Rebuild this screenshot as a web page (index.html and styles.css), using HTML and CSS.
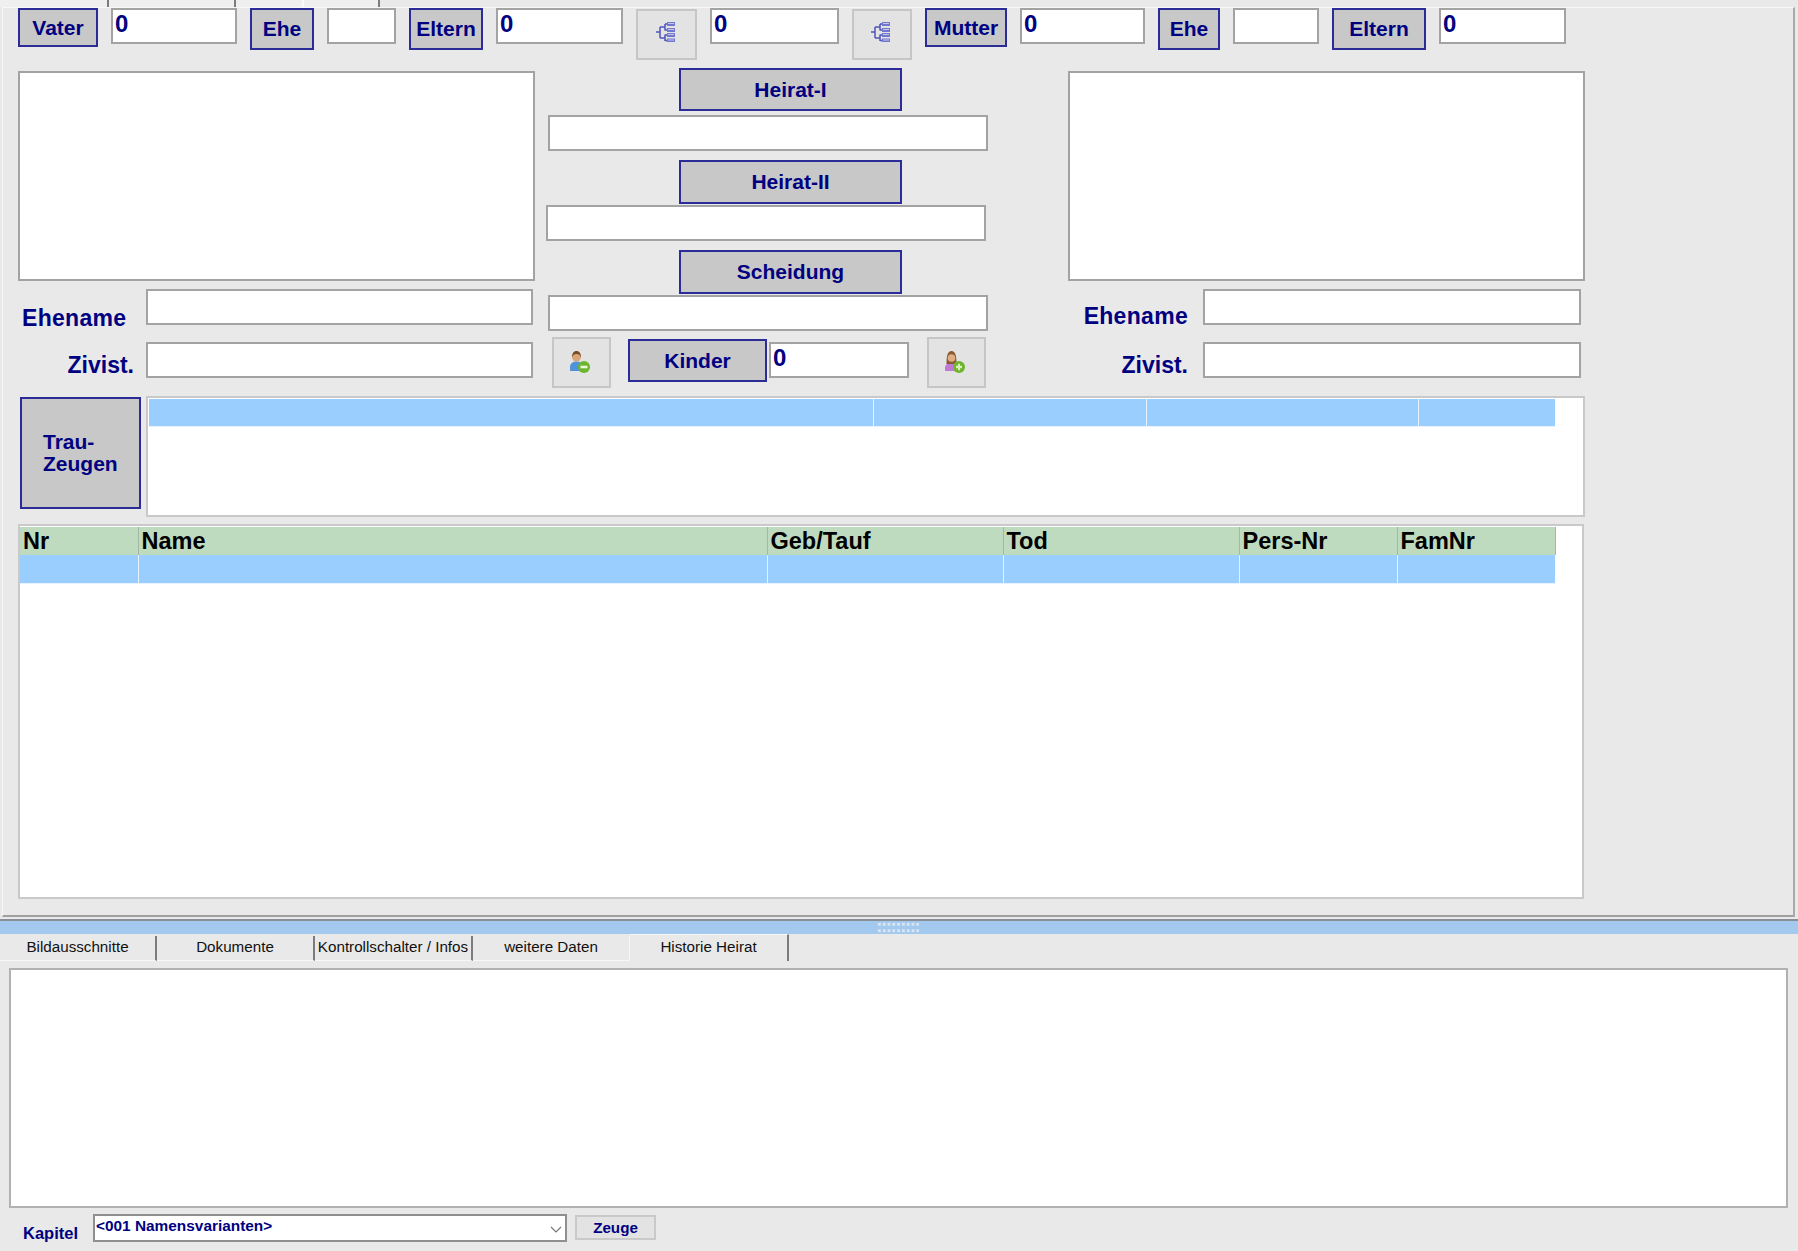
FILE: index.html
```html
<!DOCTYPE html>
<html lang="de">
<head>
  <meta charset="UTF-8">
  <title>Familie</title>
  <link rel="stylesheet" href="styles.css">
</head>
<body>
  <div class="tab-stubs">
    <div class="stub"></div>
    <div class="stub"></div>
    <div class="stub stub-light"></div>
    <div class="stub"></div>
  </div>

  <div class="upper">
    <div class="parents">
      <div class="btn btn-low">Vater</div>
      <div class="field field-num">0</div>
      <div class="btn btn-mid">Ehe</div>
      <div class="field"></div>
      <div class="btn btn-mid">Eltern</div>
      <div class="field field-num">0</div>
      <div class="icon-btn">
        <svg class="tree-icon" viewBox="0 0 20 20"><path d="M0 10h4M4 5v11M4 5h5M4 16h5M9 2v6.500M9 12.500V19M9 2h2M9 8h2M9 13h2M9 18.500h2" fill="none" stroke="#4f55bd" stroke-width="1.500"/><path d="M11 0h8v4h-8zM11 6h8v4h-8zM11 11h8v4h-8zM11 16.500h8v3.500h-8z" fill="#7277cf"/><path d="M12 1.500h6M12 7.500h6M12 12.500h6M12 18h6" stroke="#c3c6ea"/></svg>
      </div>
      <div class="field field-num">0</div>
      <div class="icon-btn">
        <svg class="tree-icon" viewBox="0 0 20 20"><path d="M0 10h4M4 5v11M4 5h5M4 16h5M9 2v6.500M9 12.500V19M9 2h2M9 8h2M9 13h2M9 18.500h2" fill="none" stroke="#4f55bd" stroke-width="1.500"/><path d="M11 0h8v4h-8zM11 6h8v4h-8zM11 11h8v4h-8zM11 16.500h8v3.500h-8z" fill="#7277cf"/><path d="M12 1.500h6M12 7.500h6M12 12.500h6M12 18h6" stroke="#c3c6ea"/></svg>
      </div>
      <div class="btn btn-low">Mutter</div>
      <div class="field field-num">0</div>
      <div class="btn btn-mid">Ehe</div>
      <div class="field"></div>
      <div class="btn btn-mid">Eltern</div>
      <div class="field field-num">0</div>
    </div>

    <div class="marriage">
      <div class="spouse">
        <div class="field spouse-box"></div>
        <div class="form-row row-name">
          <div class="label label-name">Ehename</div>
          <div class="field form-field"></div>
        </div>
        <div class="form-row row-civil">
          <div class="label label-civil">Zivist.</div>
          <div class="field form-field"></div>
        </div>
      </div>

      <div class="events">
        <div class="btn event-btn event-first">Heirat-I</div>
        <div class="field event-field event-field-in"></div>
        <div class="btn event-btn">Heirat-II</div>
        <div class="field event-field"></div>
        <div class="btn event-btn">Scheidung</div>
        <div class="field event-field event-field-in"></div>
        <div class="children">
          <div class="icon-btn">
            <svg class="person-icon" viewBox="0 0 20 22">
              <path d="M0 20v-4c0-3.500 3-5.500 6.500-5.500s6.500 2 6.500 5.500v4z" fill="#4f93d8"/>
              <circle cx="6.500" cy="6" r="4.500" fill="#d9a679"/>
              <path d="M2 6.500C2 2 4 0 6.500 0S11 2 11 6.500C10 4 9 3 6.500 3S3 4 2 6.500z" fill="#7a4a24"/>
              <circle cx="14" cy="16" r="6" fill="#6cb52c"/>
              <rect x="10.500" y="14.700" width="7" height="2.600" fill="#eaf7d8"/>
            </svg>
          </div>
          <div class="btn kinder-btn">Kinder</div>
          <div class="field field-num kinder-field">0</div>
          <div class="icon-btn">
            <svg class="person-icon" viewBox="0 0 20 22">
              <path d="M0 20v-3c0-3.500 3-5.500 6.500-5.500S13 13.500 13 17v3z" fill="#c07ad4"/>
              <path d="M1.500 13c0-8 1-13 5-13s5 5 5 13z" fill="#8a5a30"/>
              <circle cx="6.500" cy="7" r="3.800" fill="#dfae84"/>
              <circle cx="14" cy="16" r="6" fill="#6cb52c"/>
              <path d="M11 14.800h2v-2h2v2h2v2.400h-2v2h-2v-2h-2z" fill="#d9efb8"/>
            </svg>
          </div>
        </div>
      </div>

      <div class="spouse">
        <div class="field spouse-box"></div>
        <div class="form-row row-name">
          <div class="label label-name-r">Ehename</div>
          <div class="field form-field-r"></div>
        </div>
        <div class="form-row row-civil">
          <div class="label label-civil-r">Zivist.</div>
          <div class="field form-field-r"></div>
        </div>
      </div>
    </div>

    <div class="witnesses">
      <div class="btn witness-btn">Trau-<br>Zeugen</div>
      <div class="grid-box witness-box">
        <table class="witness-table">
          <tr class="row-selected">
            <td class="wc-1"></td>
            <td class="wc-2"></td>
            <td class="wc-3"></td>
            <td class="wc-4"></td>
          </tr>
        </table>
      </div>
    </div>

    <div class="grid-box kids-box">
      <table class="kids-table">
        <tr class="row-head">
          <th class="kc-1">Nr</th>
          <th class="kc-2">Name</th>
          <th class="kc-3">Geb/Tauf</th>
          <th class="kc-4">Tod</th>
          <th class="kc-5">Pers-Nr</th>
          <th class="kc-6">FamNr</th>
        </tr>
        <tr class="row-selected">
          <td></td><td></td><td></td><td></td><td></td><td></td>
        </tr>
      </table>
    </div>
  </div>

  <div class="splitter"><div class="grip"></div></div>

  <div class="lower-tabs">
    <div class="tab">Bildausschnitte</div>
    <div class="tab">Dokumente</div>
    <div class="tab">Kontrollschalter / Infos</div>
    <div class="tab tab-plain">weitere Daten</div>
    <div class="tab tab-active">Historie Heirat</div>
  </div>

  <div class="history-box"></div>

  <div class="chapter-row">
    <div class="chapter-label">Kapitel</div>
    <div class="chapter-select">
      <span>&lt;001 Namensvarianten&gt;</span>
      <svg class="chevron" viewBox="0 0 12 8"><path d="M1 1l5 5 5-5" fill="none" stroke="#777" stroke-width="1.200"/></svg>
    </div>
    <div class="zeuge-btn">Zeuge</div>
  </div>
</body>
</html>
```

FILE: styles.css
```css
* {
  box-sizing: border-box;
}

body {
  margin: 0;
  height: 1251px;
  overflow: hidden;
  background: #e9e9e9;
  font-family: "Liberation Sans", Arial, sans-serif;
  color: #000080;
}

/* remains of the upper tab bar */
.tab-stubs {
  display: grid;
  grid-template-columns: 109px 127px 68px 76px;
  height: 7px;
}

.stub {
  background: #efefef;
  border-right: 2px solid #7c7c7c;
}

.stub-light {
  border-right-color: #fafafa;
}

.upper {
  height: 910px;
  margin: 0 3px 0 2px;
  border-top: 1px solid #f8f8f8;
  border-left: 1px solid #f6f6f6;
  border-right: 2px solid #a9a9a9;
  border-bottom: 2px solid #a0a0a0;
}

.parents {
  display: grid;
  grid-template-columns: 80px 126px 64px 69px 74px 127px 61px 129px 60px 82px 125px 62px 86px 94px 127px;
  column-gap: 13px;
  align-items: start;
  height: 52px;
  margin-left: 15px;
}

.btn {
  display: flex;
  justify-content: center;
  align-items: center;
  background: #c8c8c8;
  border: 2px solid #2c2c98;
  font-size: 21px;
  font-weight: bold;
}

.btn-low {
  height: 39px;
}

.btn-mid {
  height: 42px;
}

.field {
  height: 36px;
  background: #fff;
  border: 2px solid #a3a3a3;
}

.field-num {
  padding-left: 2px;
  font-size: 24px;
  font-weight: bold;
  line-height: 27px;
}

.icon-btn {
  display: flex;
  justify-content: center;
  align-items: center;
  width: 59px;
  height: 51px;
  margin-top: 1px;
  background: #e3e3e3;
  border: 2px solid #c6c6c6;
}

.parents .icon-btn {
  width: 100%;
}

.tree-icon {
  width: 20px;
  height: 20px;
  margin: 0 0 5px -2px;
}

.person-icon {
  width: 20px;
  height: 22px;
  margin: 0 0 2px -3px;
}

.marriage {
  display: grid;
  grid-template-columns: 517px 533px 517px;
  height: 319px;
  margin: 8px 0 0 15px;
}

.spouse {
  padding-top: 3px;
}

.spouse-box {
  height: 210px;
}

.form-row {
  display: flex;
  height: 36px;
}

.row-name {
  margin-top: 8px;
}

.row-civil {
  margin-top: 17px;
}

.label {
  font-size: 23px;
  font-weight: bold;
  line-height: 26px;
  white-space: nowrap;
}

.label-name {
  width: 128px;
  margin-top: 16px;
  padding-left: 4px;
  letter-spacing: 0.300px;
}

.label-civil {
  width: 128px;
  margin-top: 10px;
  padding-right: 12px;
  text-align: right;
}

.label-name-r,
.label-civil-r {
  width: 135px;
  padding-right: 15px;
  text-align: right;
}

.label-name-r {
  margin-top: 14px;
  letter-spacing: 0.300px;
}

.label-civil-r {
  margin-top: 10px;
}

.form-field {
  width: 387px;
}

.form-field-r {
  width: 378px;
}

.events {
  display: flex;
  flex-direction: column;
  align-items: flex-start;
  margin-left: 11px;
  width: 441px;
}

.event-btn {
  width: 223px;
  height: 44px;
  margin: 9px 0 1px 133px;
}

.event-first {
  height: 43px;
  margin-top: 0;
  margin-bottom: 4px;
}

.event-field {
  width: 440px;
}

.event-field-in {
  margin-left: 2px;
}

.children {
  display: flex;
  align-items: flex-start;
  margin: 5px 0 0 6px;
}

.kinder-btn {
  width: 139px;
  height: 43px;
  margin: 3px 0 0 17px;
}

.kinder-field {
  width: 140px;
  margin: 6px 18px 0 2px;
}

.witnesses {
  display: flex;
  align-items: flex-start;
  margin: 9px 0 0 17px;
}

.witness-btn {
  width: 121px;
  height: 112px;
  margin-top: 1px;
  padding-left: 21px;
  justify-content: flex-start;
  line-height: 22px;
}

.grid-box {
  background: #fff;
  border: 2px solid #c9c9c9;
}

.witness-box {
  width: 1439px;
  height: 121px;
  margin-left: 5px;
  padding: 1px 0 0 1px;
}

table {
  border-collapse: collapse;
  table-layout: fixed;
}

.witness-table {
  width: 1406px;
}

.wc-1 { width: 724px; }
.wc-2 { width: 273px; }
.wc-3 { width: 272px; }
.wc-4 { width: 137px; }

.row-selected td {
  height: 27px;
  padding: 0;
  background: #99ceff;
  border-right: 1px solid #e6f2fd;
  border-bottom: 1px solid #e6f2fd;
}

.row-selected td:last-child {
  border-right: 0;
}

.kids-box {
  width: 1566px;
  height: 375px;
  margin: 7px 0 0 15px;
  padding-top: 1px;
}

.kids-table {
  width: 1535px;
}

.kc-1 { width: 118px; }
.kc-2 { width: 629px; }
.kc-3 { width: 236px; }
.kc-4 { width: 236px; }
.kc-5 { width: 158px; }
.kc-6 { width: 158px; }

.row-head th {
  height: 28px;
  padding: 0 0 0 3px;
  background: #bfdbbf;
  border-right: 1px solid #a3b8a3;
  color: #000;
  font-size: 23.500px;
  font-weight: bold;
  line-height: 26px;
  text-align: left;
}

.kids-table .row-selected td {
  height: 28px;
}

.splitter {
  display: flex;
  justify-content: center;
  height: 15px;
  margin-top: 2px;
  background: #a3c9ee;
  border-top: 2px solid #8a8f96;
}

.grip {
  width: 42px;
  height: 13px;
  margin-left: -3px;
  background-image: radial-gradient(circle, #dbe6f1 1.300px, transparent 1.800px);
  background-size: 4.800px 6.500px;
}

.lower-tabs {
  display: grid;
  grid-template-columns: 157px 158px 158px 157px 159px;
  height: 27px;
}

.tab {
  display: flex;
  justify-content: center;
  align-items: center;
  margin-top: 2px;
  padding-bottom: 3px;
  background: #e9e9e9;
  border-right: 2px solid #7c7c7c;
  border-bottom: 1px solid #f7f7f7;
  color: #111;
  font-size: 15.200px;
  white-space: nowrap;
}

.tab-plain {
  border-right: 1px solid #f7f7f7;
}

.tab-active {
  margin-top: 0;
  padding-bottom: 4px;
  border-top: 1px solid #f7f7f7;
  border-bottom: 0;
}

.history-box {
  width: 1779px;
  height: 240px;
  margin: 7px 0 0 9px;
  background: #fff;
  border: 2px solid #b1b1b1;
}

.chapter-row {
  display: flex;
  align-items: flex-start;
  margin: 6px 0 0 23px;
}

.chapter-label {
  width: 70px;
  margin-top: 10px;
  font-size: 16.500px;
  font-weight: bold;
  line-height: 19px;
}

.chapter-select {
  display: flex;
  justify-content: space-between;
  width: 474px;
  height: 28px;
  padding: 0 3px 0 1px;
  background: #fff;
  border: 2px solid #8f8f8f;
  font-size: 15.400px;
  font-weight: bold;
  line-height: 19px;
}

.chevron {
  width: 12px;
  height: 8px;
  margin-top: 10px;
}

.zeuge-btn {
  width: 81px;
  height: 25px;
  margin: 1px 0 0 8px;
  background: #e3e3e3;
  border: 2px solid #c9c9c9;
  font-size: 15.200px;
  font-weight: bold;
  line-height: 21px;
  text-align: center;
}
```
